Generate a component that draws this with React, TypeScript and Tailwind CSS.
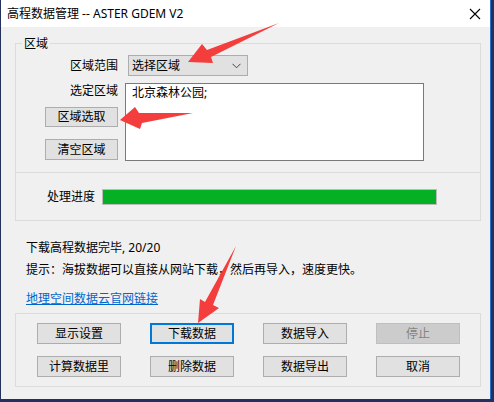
import React from "react";

const font = { fontFamily: '"Noto Sans", "Noto Sans CJK SC", sans-serif' };

function Btn({ children, focus, disabled }: { children: React.ReactNode; focus?: boolean; disabled?: boolean }) {
  const cls = disabled
    ? "bg-[#cccccc] border border-[#bfbfbf] text-[#838383]"
    : focus
    ? "bg-[#e1e1e1] border-2 border-[#0078d7] text-black"
    : "bg-[#e1e1e1] border border-[#adadad] text-black";
  return (
    <div className={`w-[84px] h-[21px] flex items-center justify-center text-[12px] leading-none ${cls}`}>
      {children}
    </div>
  );
}

export default function App() {
  return (
    <div className="relative w-[494px] h-[402px] bg-[#24305e] overflow-hidden" style={font}>
      <div className="ml-[1px] w-[490px] h-[399px] bg-[#f0f0f0] flex flex-col border-r border-[#2d6fc4]">
        {/* title bar */}
        <div className="h-[27px] bg-white flex items-center justify-between pl-[6px] pr-[9px] shrink-0">
          <span className="text-[12px] text-black leading-none">高程数据管理 -- ASTER GDEM V2</span>
          <svg width="12" height="12" viewBox="0 0 12 12">
            <path d="M1 1 L11 11 M11 1 L1 11" stroke="#000" strokeWidth="1.1" />
          </svg>
        </div>

        <div className="pl-[14px] pr-[9px] flex flex-col">
          {/* region group */}
          <div className="relative mt-[16px] border border-[#dcdcdc] h-[178px] flex flex-col">
            <span className="absolute left-[6px] top-[-8px] px-[2px] bg-[#f0f0f0] text-[12px] leading-[16px] text-black">区域</span>
            <div className="flex flex-col border-b border-[#dcdcdc] h-[129px]">
              <div className="flex items-center mt-[11px]">
                <div className="w-[102px] text-right text-[12px] leading-none">区域范围</div>
                <div className="ml-[10px] w-[120px] h-[21px] bg-[#e1e1e1] border border-[#adadad] flex items-center justify-between pl-[3px] pr-[6px]">
                  <span className="text-[12px] leading-none">选择区域</span>
                  <svg width="9" height="6" viewBox="0 0 9 6">
                    <path d="M0.5 0.8 L4.5 4.8 L8.5 0.8" stroke="#444" strokeWidth="1" fill="none" />
                  </svg>
                </div>
              </div>
              <div className="flex mt-[7px]">
                <div className="w-[102px] flex flex-col">
                  <div className="text-right text-[12px] leading-[16px] h-[16px] mt-[0px]">选定区域</div>
                  <div className="ml-[29px] mt-[8px] w-[73px] h-[20px] bg-[#e1e1e1] border border-[#adadad] flex items-center justify-center text-[12px] leading-none">区域选取</div>
                  <div className="ml-[29px] mt-[12px] w-[73px] h-[21px] bg-[#e1e1e1] border border-[#adadad] flex items-center justify-center text-[12px] leading-none">清空区域</div>
                </div>
                <div className="ml-[7px] w-[299px] h-[78px] bg-white border border-[#7a7a7a] px-[6px] pt-[1px] text-[12px] leading-[16px]">
                  北京森林公园;
                </div>
              </div>
            </div>
            <div className="flex-1 flex items-center pl-[31px]">
              <span className="text-[12px] leading-none w-[48px]">处理进度</span>
              <div className="ml-[7px] w-[335px] h-[16px] bg-[#06b025] border border-[#bcbcbc]" />
            </div>
          </div>

          <div className="pl-[11px] text-[12px] leading-[16px] text-black mt-[19px]">下载高程数据完毕, 20/20</div>
          <div className="pl-[11px] text-[12px] leading-[16px] text-black mt-[6px]">提示：海拔数据可以直接从网站下载，然后再导入，速度更快。</div>
          <div className="pl-[11px] text-[12px] leading-[16px] mt-[13px]">
            <span className="text-[#0066cc] underline">地理空间数据云官网链接</span>
          </div>

          {/* buttons group */}
          <div className="mt-[6px] border border-[#dcdcdc] h-[74px] pl-[21px] pt-[9px]">
            <div className="grid grid-cols-[84px_84px_84px_84px] gap-x-[29px] gap-y-[12px]">
              <Btn>显示设置</Btn>
              <Btn focus>下载数据</Btn>
              <Btn>数据导入</Btn>
              <Btn disabled>停止</Btn>
              <Btn>计算数据里</Btn>
              <Btn>删除数据</Btn>
              <Btn>数据导出</Btn>
              <Btn>取消</Btn>
            </div>
          </div>
        </div>
      </div>

      {/* red annotation arrows */}
      <svg className="absolute left-0 top-0 pointer-events-none" width="494" height="402" viewBox="0 0 494 402">
        <polygon points="188,62 202,44 207,50 279,23 211,57 213,63" fill="#f43d3d" />
        <polygon points="120,120 135,107 139,113 193,113 142,123 140,129" fill="#f43d3d" />
        <polygon points="198,323 200,299 205,302 236,246 213,305 219,308" fill="#f43d3d" />
      </svg>
    </div>
  );
}
